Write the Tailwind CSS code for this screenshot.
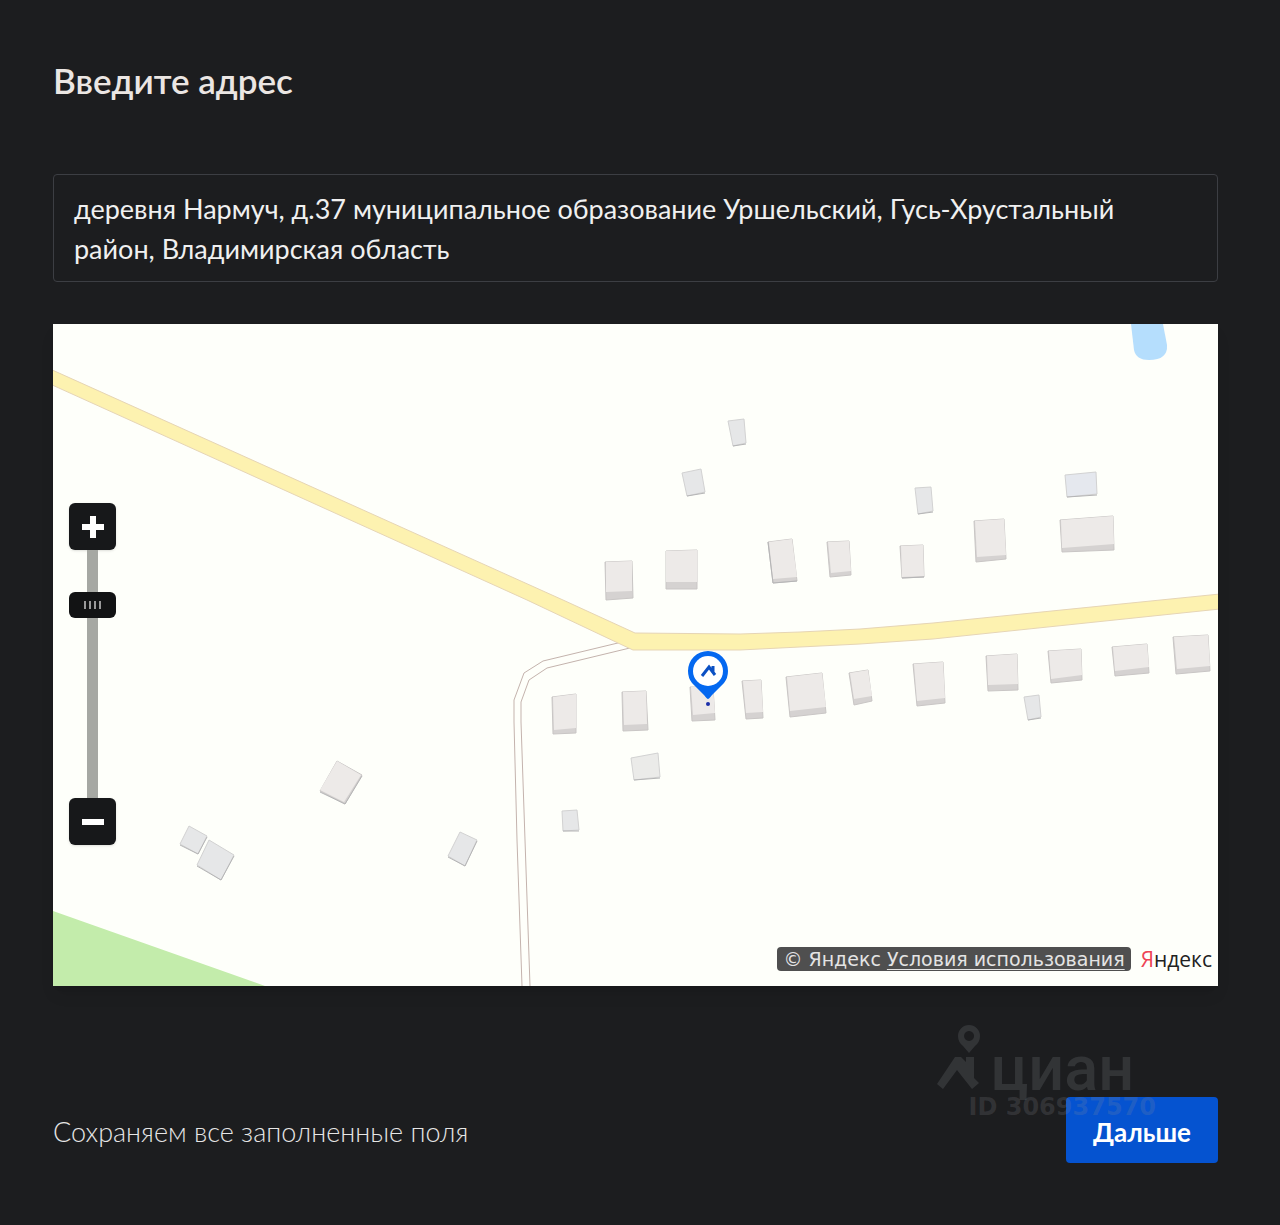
<!DOCTYPE html>
<html lang="ru">
<head>
  <meta charset="UTF-8" />
  <meta name="viewport" content="width=device-width, initial-scale=1.0"/>
  <title>Введите адрес</title>
  <script src="https://cdn.jsdelivr.net/npm/@tailwindcss/browser@4"></script>
</head>
<body class="bg-[#1c1d1f] text-[#ececec] font-[Lato,'Open_Sans',sans-serif] min-h-screen">

  <form class="pt-14 pb-14 pl-[53px] pr-[62px]">
    <h1><label for="address" class="block text-[35px] leading-[48px] font-semibold text-[#ebe6e3]">Введите адрес</label></h1>

    <textarea id="address" rows="2" class="block w-full mt-[70px] px-5 pt-[14px] pb-3 resize-none rounded-sm border border-[#3c3e43] bg-transparent text-[27px] leading-10 text-[#f0f0f0] overflow-hidden focus:outline-none">деревня Нармуч, д.37 муниципальное образование Уршельский, Гусь-Хрустальный район, Владимирская область</textarea>

    <!-- Map -->
    <div class="relative mt-[42px] bg-[#fefffa] shadow-lg">
      <svg viewBox="53 324 1165 662" class="block w-full" role="img" aria-label="Карта">
        <!-- Pond and forest -->
        <path d="M1131 324 L1134 350 Q1136 360 1149 360 Q1168 360 1167 345 L1163 324 Z" fill="#b5defd"/>
        <path d="M53 911 L265 986 H53 Z" fill="#c3ecab"/>

        <!-- Side road -->
        <g fill="none" stroke="#c4b3ad" stroke-width="1">
          <path d="M622 642 L543 661 L524 673 L514 700 V722 L517 840 L522 986"/>
          <path d="M634 647 L547 668 L529 680 L521 702 V722 L525 840 L530 986"/>
        </g>

        <!-- Main road -->
        <path d="M50 369 L563 600 L635 633 L740 634 L800 632 L860 629 L933 623 L1220 594 V609 L933 639 L860 644 L800 647 L740 650 L633 650 L618 643 L527 600 L50 384 Z" fill="#fdf2b0" stroke="#e6d5b5" stroke-width="1"/>

        <!-- House walls -->
        <g fill="#d5d2d1" stroke="#c9c6c5" stroke-width="1" stroke-linejoin="round">
          <path d="M605 562 L632 561 L633 598 L606 600 Z"/>
          <path d="M666 551 L697 550 V589 H666 Z"/>
          <path d="M768 542 L792 539 L797 581 L773 583 Z"/>
          <path d="M827 542 L849 541 L851 575 L830 577 Z"/>
          <path d="M900 546 L923 545 L924 577 L902 578 Z"/>
          <path d="M974 521 L1004 519 L1006 559 L976 562 Z"/>
          <path d="M1060 520 L1113 516 L1114 550 L1062 552 Z"/>
          <path d="M552 697 L576 694 V733 L553 734 Z"/>
          <path d="M622 692 L646 691 L648 730 L623 731 Z"/>
          <path d="M690 687 H713 L715 720 L692 721 Z"/>
          <path d="M742 681 L761 680 L763 718 L746 719 Z"/>
          <path d="M786 677 L822 673 L826 713 L790 717 Z"/>
          <path d="M849 673 L868 670 L872 701 L854 705 Z"/>
          <path d="M913 664 L943 662 L945 703 L917 706 Z"/>
          <path d="M986 656 L1017 654 L1018 690 L988 691 Z"/>
          <path d="M1048 651 L1081 649 L1082 680 L1051 683 Z"/>
          <path d="M1112 647 L1147 644 L1149 673 L1115 676 Z"/>
          <path d="M1173 637 L1208 635 L1210 671 L1176 674 Z"/>
          <path d="M337 761 L362 775 L345 804 L320 791 Z"/>
        </g>
        <!-- House roofs -->
        <g fill="#edeae8">
          <path d="M606 562 L632 561 V591 L606 592 Z"/>
          <path d="M666 551 L697 550 V582 H666 Z"/>
          <path d="M769 542 L792 539 L797 577 L773 579 Z"/>
          <path d="M828 542 L849 541 L851 571 L831 573 Z"/>
          <path d="M901 546 L923 545 L924 576 L902 577 Z"/>
          <path d="M975 521 L1004 519 L1006 555 L977 557 Z"/>
          <path d="M1061 520 L1113 516 L1114 544 L1062 548 Z"/>
          <path d="M553 697 L576 694 V728 L554 730 Z"/>
          <path d="M623 692 L646 691 L647 724 L624 725 Z"/>
          <path d="M691 687 H713 L715 713 L693 715 Z"/>
          <path d="M743 681 L761 680 L763 712 L746 713 Z"/>
          <path d="M787 677 L822 673 L826 707 L790 711 Z"/>
          <path d="M850 673 L868 670 L872 696 L854 699 Z"/>
          <path d="M914 664 L943 662 L945 698 L917 701 Z"/>
          <path d="M987 656 L1017 654 L1018 684 L988 685 Z"/>
          <path d="M1049 651 L1081 649 L1082 675 L1051 679 Z"/>
          <path d="M1113 647 L1147 644 L1149 667 L1115 671 Z"/>
          <path d="M1174 637 L1208 635 L1210 666 L1177 669 Z"/>
          <path d="M337 761 L361 775 L344 802 L320 790 Z"/>
        </g>
        <!-- Sheds -->
        <g fill="#e6e7e8" stroke="#d2d2d2" stroke-width="1" stroke-linejoin="round">
          <path d="M728 421 L744 419 L746 443 L733 446 Z"/>
          <path d="M682 473 L701 469 L705 492 L687 496 Z"/>
          <path d="M915 488 L931 487 L933 511 L918 514 Z"/>
          <path d="M1065 475 L1096 472 L1097 494 L1067 497 Z" fill="#e5e8ee"/>
          <path d="M1024 697 L1039 695 L1041 717 L1028 720 Z"/>
          <path d="M631 758 L658 753 L660 777 L634 780 Z" fill="#ebebe9"/>
          <path d="M562 811 L577 810 L579 830 L563 831 Z"/>
          <path d="M189 826 L207 836 L198 854 L180 844 Z"/>
          <path d="M209 840 L234 855 L221 880 L197 865 Z"/>
          <path d="M460 832 L477 840 L465 866 L448 856 Z"/>
        </g>
        <g fill="none" stroke="#b5b5b6" stroke-width="1">
          <path d="M746 444 L733 446 M705 493 L687 496 M933 512 L918 514 M1097 495 L1067 497 M1041 718 L1028 720 M660 778 L634 780 M579 831 H563"/>
          <path d="M207 837 L198 854 L180 845 M234 856 L221 880 L197 866 M477 841 L465 866 L448 857 M362 776 L345 804 L320 792"/>
          <path d="M924 577 L902 578 M768 542 L773 583 L797 581"/>
        </g>

        <!-- Pin -->
        <path d="M708 699 Q707 699 704 695 L692 683 Q688 678 688 671 A20 20 0 1 1 728 671 Q728 678 724 683 L712 695 Q709 699 708 699 Z" fill="#0468f0"/>
        <circle cx="708" cy="671" r="15" fill="#fff"/>
        <path d="M702 676 L709 667 L715 675 M713 666 V672" fill="none" stroke="#0b50c4" stroke-width="3"/>
        <circle cx="708" cy="704" r="2" fill="#1b2fa8"/>
      </svg>

      <!-- Zoom control -->
      <div class="absolute left-4 top-[179px] flex w-[47px] flex-col items-center">
        <button type="button" aria-label="Приблизить" class="flex size-[47px] items-center justify-center rounded-md bg-[#17181a] shadow-sm">
          <svg class="size-6" viewBox="0 0 24 24" fill="#fff"><path d="M9 1h6v8h8v6h-8v8H9v-8H1V9h8z"/></svg>
        </button>
        <input type="range" aria-label="Масштаб" min="0" max="100" value="81" class="h-[248px] w-[47px] appearance-none [writing-mode:vertical-lr] [direction:rtl] bg-[linear-gradient(#a6a8a3,#a6a8a3)] bg-[length:11px_100%] bg-center bg-no-repeat [&::-webkit-slider-thumb]:appearance-none [&::-webkit-slider-thumb]:h-[26px] [&::-webkit-slider-thumb]:w-[47px] [&::-webkit-slider-thumb]:rounded-md [&::-webkit-slider-thumb]:bg-[#121314] [&::-webkit-slider-thumb]:bg-[repeating-linear-gradient(90deg,#9a9a9a_0_2px,#121314_2px_5px)] [&::-webkit-slider-thumb]:bg-[length:17px_8px] [&::-webkit-slider-thumb]:bg-center [&::-webkit-slider-thumb]:bg-no-repeat"/>
        <button type="button" aria-label="Отдалить" class="flex size-[47px] items-center justify-center rounded-md bg-[#17181a] shadow-sm">
          <svg class="size-6" viewBox="0 0 24 24" fill="#fff"><path d="M1 9h22v6H1z"/></svg>
        </button>
      </div>

      <!-- Copyright -->
      <div class="absolute right-[6px] bottom-[15px] flex items-center gap-[10px] whitespace-nowrap font-['Open_Sans',sans-serif]">
        <p class="h-6 rounded-sm bg-[#4f4f4f] px-[6px] text-[19px] leading-6 text-[#e4e4e4] font-['DejaVu_Sans',sans-serif]">© Яндекс <a href="#" class="underline underline-offset-3">Условия использования</a></p>
        <a href="#" class="text-[21px] leading-6 text-[#222]"><span class="text-[#ee4455]">Я</span>ндекс</a>
      </div>
    </div>

    <div class="relative mt-[111px] flex items-center justify-between">
      <p class="pt-1 text-[27px] leading-10 font-light text-[#e6e6e6]">Сохраняем все заполненные поля</p>
      <button type="submit" class="h-[66px] w-[152px] rounded-sm bg-[#0553d0] pt-1 text-[26px] font-bold text-white">Дальше</button>

      <!-- Watermark -->
      <div class="pointer-events-none absolute right-[62px] bottom-[44px] text-[#8c9096]/20">
        <div class="flex items-end gap-2">
          <svg class="mb-1 h-[66px] w-[46px] shrink-0" viewBox="2 0 46 66" fill="currentColor">
            <path fill-rule="evenodd" d="M34 0 a11 11 0 0 1 11 11 q0 6 -5 10 l-6 7 l-6 -7 q-5 -4 -5 -10 a11 11 0 0 1 11 -11 Z M34 6 a5 5 0 1 0 0.1 0 Z"/>
            <path d="M2 59 L20 32 H26 L31 37 V32 H39 V53 L44 58 L37 64 L22 45 L8 64 Z"/>
          </svg>
          <span class="text-[63px] leading-[52px] font-medium font-[Roboto,sans-serif]">циан</span>
        </div>
        <div class="pl-8 text-[24px] leading-6 font-bold whitespace-nowrap font-['DejaVu_Sans',sans-serif]">ID 306937570</div>
      </div>
    </div>
  </form>

</body>
</html>
